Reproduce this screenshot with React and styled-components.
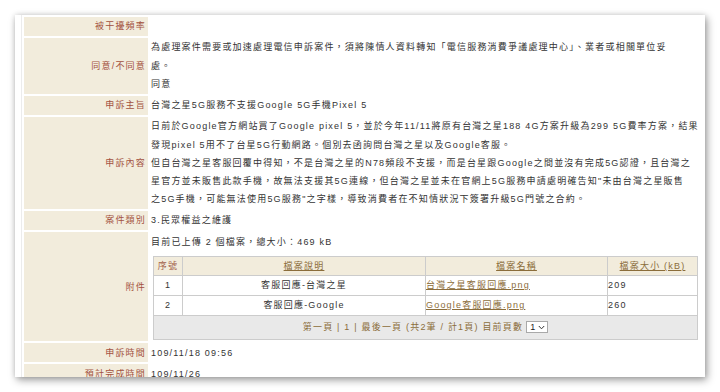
import React from "react";
import styled, { createGlobalStyle } from "styled-components";

const Global = createGlobalStyle`
  html, body { margin: 0; padding: 0; background: #ffffff; }
  body {
    font-family: "Liberation Sans", "Noto Sans CJK TC", sans-serif;
    font-size: 9px;
    letter-spacing: 1.2px;
    color: #333333;
  }
`;

const Page = styled.div`
  padding: 15px;
  width: 720px;
  height: 392px;
  box-sizing: border-box;
`;

const Card = styled.div`
  width: 690px;
  height: 362px;
  box-sizing: border-box;
  padding: 0 4px 0 6px;
  background: #ffffff;
  overflow: hidden;
  box-shadow: 2px 3px 8px rgba(0, 0, 0, 0.38), 0 0 5px rgba(0, 0, 0, 0.12);
`;

const DetailTable = styled.table`
  width: 680px;
  border-spacing: 2px;
  border-left: 1px solid #ececec;
  table-layout: fixed;
`;

const Label = styled.th`
  width: 122px;
  background: #f2ecdc;
  color: #a3523f;
  font-weight: normal;
  text-align: right;
  vertical-align: middle;
  padding: 0.4px 2px 0.4px 0;
  line-height: 18.3px;
  white-space: nowrap;
`;

const Value = styled.td`
  padding: 0.4px 0 0.4px 1px;
  line-height: 18.3px;
  vertical-align: top;
  color: #333333;
`;

const Para = styled.div``;

const FileTable = styled.table`
  width: calc(100% - 3px);
  margin: 5px 0 1px 2px;
  border-collapse: collapse;
  border: 1px solid #c4c4c4;
`;

const HeadCell = styled.th`
  background: #f2ecdc;
  font-weight: normal;
  height: 18px;
  padding: 0;
  line-height: 18px;
  text-align: center;
  border: 1px solid #cccccc;
  color: ${(p) => (p.$plain ? "#a3604a" : "#8b6d3b")};
  width: ${(p) => p.$w || "auto"};
`;

const HeadLink = styled.a`
  color: #8b6d3b;
  text-decoration: underline;
`;

const Cell = styled.td`
  height: 19px;
  padding: 0;
  line-height: 19px;
  border: 1px solid #cccccc;
  text-align: ${(p) => p.$align || "left"};
  color: #333333;
`;

const FileLink = styled.a`
  color: #8b6d3b;
  text-decoration: underline;
`;

const PagerCell = styled.td`
  background: #e9e9e9;
  height: 23px;
  padding: 0;
  border: 1px solid #cccccc;
  text-align: center;
  color: #8b6d3b;
  vertical-align: middle;
`;

const PagerInner = styled.div`
  display: inline-flex;
  align-items: center;
  gap: 3px;
`;

const SelectBox = styled.span`
  display: inline-flex;
  align-items: center;
  justify-content: space-between;
  box-sizing: border-box;
  width: 22px;
  height: 12px;
  padding: 0 2px 0 3px;
  background: #ffffff;
  border: 1px solid #a9a9a9;
  color: #222222;
  letter-spacing: 0;
  line-height: 10px;
`;

const Chevron = () => (
  <svg width="7" height="5" viewBox="0 0 7 5">
    <path d="M0.8 1 L3.5 3.8 L6.2 1" fill="none" stroke="#333" strokeWidth="1" />
  </svg>
);

export default function App() {
  return (
    <>
      <Global />
      <Page>
        <Card>
          <DetailTable>
            <tbody>
              <tr>
                <Label>被干擾頻率</Label>
                <Value></Value>
              </tr>
              <tr>
                <Label>同意/不同意</Label>
                <Value>
                  <Para>
                    為處理案件需要或加速處理電信申訴案件，須將陳情人資料轉知「電信服務消費爭議處理中心」、業者或相關單位妥
                    <br />
                    處。
                  </Para>
                  <Para>同意</Para>
                </Value>
              </tr>
              <tr>
                <Label>申訴主旨</Label>
                <Value>台灣之星5G服務不支援Google 5G手機Pixel 5</Value>
              </tr>
              <tr>
                <Label>申訴內容</Label>
                <Value>
                  <Para>
                    日前於Google官方網站買了Google pixel 5，並於今年11/11將原有台灣之星188 4G方案升級為299 5G費率方案，結果
                    <br />
                    發現pixel 5用不了台星5G行動網路。個別去函詢問台灣之星以及Google客服。
                  </Para>
                  <Para>
                    但自台灣之星客服回覆中得知，不是台灣之星的N78頻段不支援，而是台星跟Google之間並沒有完成5G認證，且台灣之
                    <br />
                    星官方並未販售此款手機，故無法支援其5G連線，但台灣之星並未在官網上5G服務申請處明確告知"未由台灣之星販售
                    <br />
                    之5G手機，可能無法使用5G服務"之字樣，導致消費者在不知情狀況下簽署升級5G門號之合約。
                  </Para>
                </Value>
              </tr>
              <tr>
                <Label>案件類別</Label>
                <Value>3.民眾權益之維護</Value>
              </tr>
              <tr>
                <Label>附件</Label>
                <Value>
                  <Para>目前已上傳 2 個檔案，總大小：469 kB</Para>
                  <FileTable>
                    <thead>
                      <tr>
                        <HeadCell $plain $w="28px">序號</HeadCell>
                        <HeadCell $w="242px"><HeadLink>檔案說明</HeadLink></HeadCell>
                        <HeadCell $w="181px"><HeadLink>檔案名稱</HeadLink></HeadCell>
                        <HeadCell><HeadLink>檔案大小 (kB)</HeadLink></HeadCell>
                      </tr>
                    </thead>
                    <tbody>
                      <tr>
                        <Cell $align="center">1</Cell>
                        <Cell $align="center">客服回應-台灣之星</Cell>
                        <Cell><FileLink>台灣之星客服回應.png</FileLink></Cell>
                        <Cell>209</Cell>
                      </tr>
                      <tr>
                        <Cell $align="center">2</Cell>
                        <Cell $align="center">客服回應-Google</Cell>
                        <Cell><FileLink>Google客服回應.png</FileLink></Cell>
                        <Cell>260</Cell>
                      </tr>
                      <tr>
                        <PagerCell colSpan={4}>
                          <PagerInner>
                            <span>第一頁 | 1 | 最後一頁 (共2筆 / 計1頁) 目前頁數</span>
                            <SelectBox>
                              1<Chevron />
                            </SelectBox>
                          </PagerInner>
                        </PagerCell>
                      </tr>
                    </tbody>
                  </FileTable>
                </Value>
              </tr>
              <tr>
                <Label>申訴時間</Label>
                <Value>109/11/18 09:56</Value>
              </tr>
              <tr>
                <Label>預計完成時間</Label>
                <Value>109/11/26</Value>
              </tr>
            </tbody>
          </DetailTable>
        </Card>
      </Page>
    </>
  );
}
